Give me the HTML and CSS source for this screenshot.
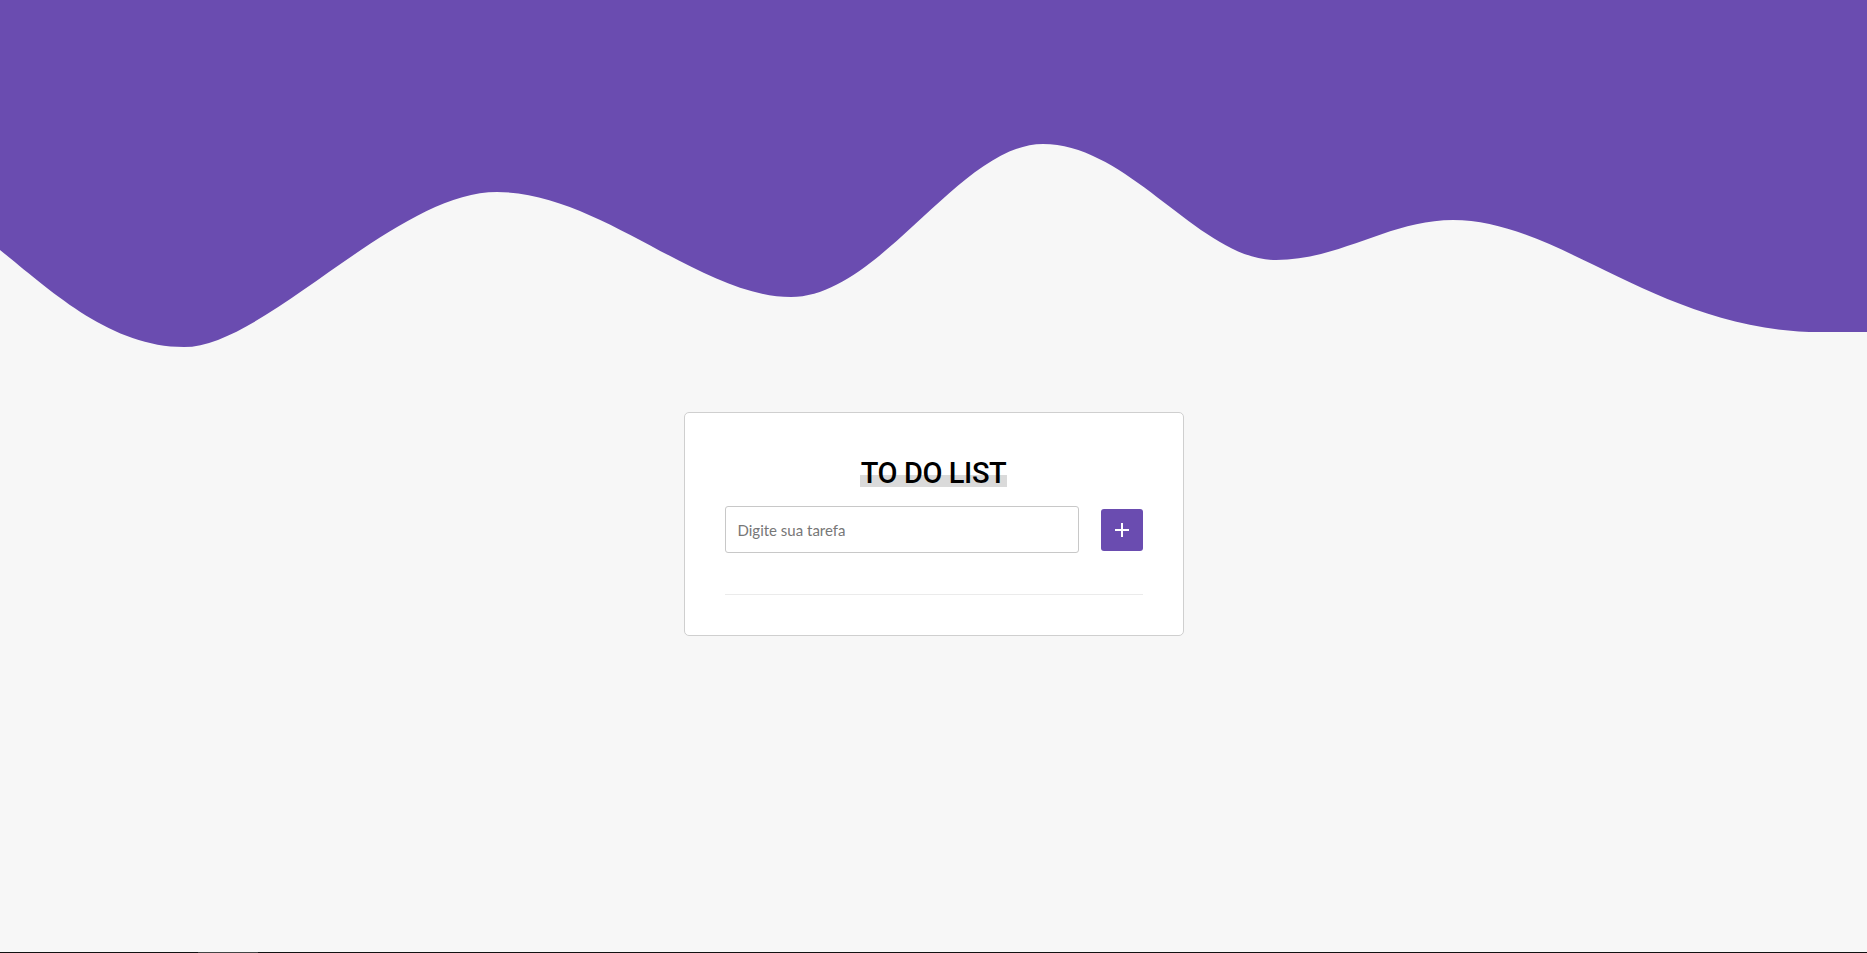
FILE: index.html
```html
<!DOCTYPE html>
<html lang="pt-BR">
<head>
<meta charset="utf-8">
<title>To Do List</title>
<link rel="stylesheet" href="styles.css">
</head>
<body>
<svg class="wave" viewBox="0 0 1867 360" preserveAspectRatio="none" aria-hidden="true">
  <path fill="#6a4cb0" d="M0,250 C50,290 110,347 184,347 C265,347 395,192 497,192 C600,192 700,297 791,297 C880,297 960,144 1043,144 C1130,144 1200,260 1276,260 C1340,260 1390,220 1453,220 C1560,220 1660,332 1820,332 L1867,332 L1867,0 L0,0 Z"/>
</svg>
<main class="card">
  <h1 class="title"><span class="title-text">TO DO LIST</span></h1>
  <div class="row">
    <input class="task-input" type="text" placeholder="Digite sua tarefa">
    <button class="add-btn" type="button" aria-label="Adicionar">
      <svg width="16" height="16" viewBox="0 0 16 16"><path d="M8 1V15M1 8H15" stroke="#fff" stroke-width="2"/></svg>
    </button>
  </div>
  <div class="sep"></div>
</main>
<div class="bottom-line"><span class="bottom-seg"></span></div>
</body>
</html>
```
FILE: styles.css
```css
html, body {
  margin: 0;
  padding: 0;
}
body {
  background: #f7f7f7;
  font-family: Lato, "Open Sans", sans-serif;
  min-height: 953px;
}
.wave {
  display: block;
  width: 100%;
  height: 360px;
}
.card {
  box-sizing: border-box;
  width: 500px;
  margin: 52px auto 0;
  background: #fff;
  border: 1px solid #cfcfcf;
  border-radius: 5px;
  padding: 40px 40px 40px;
}
.title {
  margin: 0;
  text-align: center;
  font-family: Roboto, Lato, sans-serif;
  font-size: 29px;
  font-weight: 500;
  letter-spacing: -0.4px;
  line-height: 40px;
  color: #000;
}
.title-text {
  padding: 0 1px;
  background: linear-gradient(to bottom, transparent 19px, #dadada 19px, #dadada 31px, transparent 31px);
}
.row {
  display: flex;
  align-items: center;
  gap: 22px;
  margin-top: 13px;
}
.task-input {
  box-sizing: border-box;
  width: 354px;
  height: 47px;
  border: 1px solid #c8c8c8;
  border-radius: 3px;
  padding: 0 12px;
  font-family: inherit;
  font-size: 15px;
  color: #333;
  background: #fff;
  outline: none;
}
.task-input::placeholder {
  color: #777;
}
.add-btn {
  width: 42px;
  height: 42px;
  border: none;
  border-radius: 3px;
  background: #6a4cb0;
  padding: 0;
  display: flex;
  align-items: center;
  justify-content: center;
}
.add-btn svg {
  display: block;
}
.sep {
  margin-top: 41px;
  border-top: 1px solid #ebebeb;
}
.bottom-line {
  position: fixed;
  left: 0;
  right: 0;
  bottom: 0;
  height: 1px;
  background: #111;
}
.bottom-seg {
  position: absolute;
  left: 198px;
  width: 60px;
  top: 0;
  height: 1px;
  background: #444;
}
```
